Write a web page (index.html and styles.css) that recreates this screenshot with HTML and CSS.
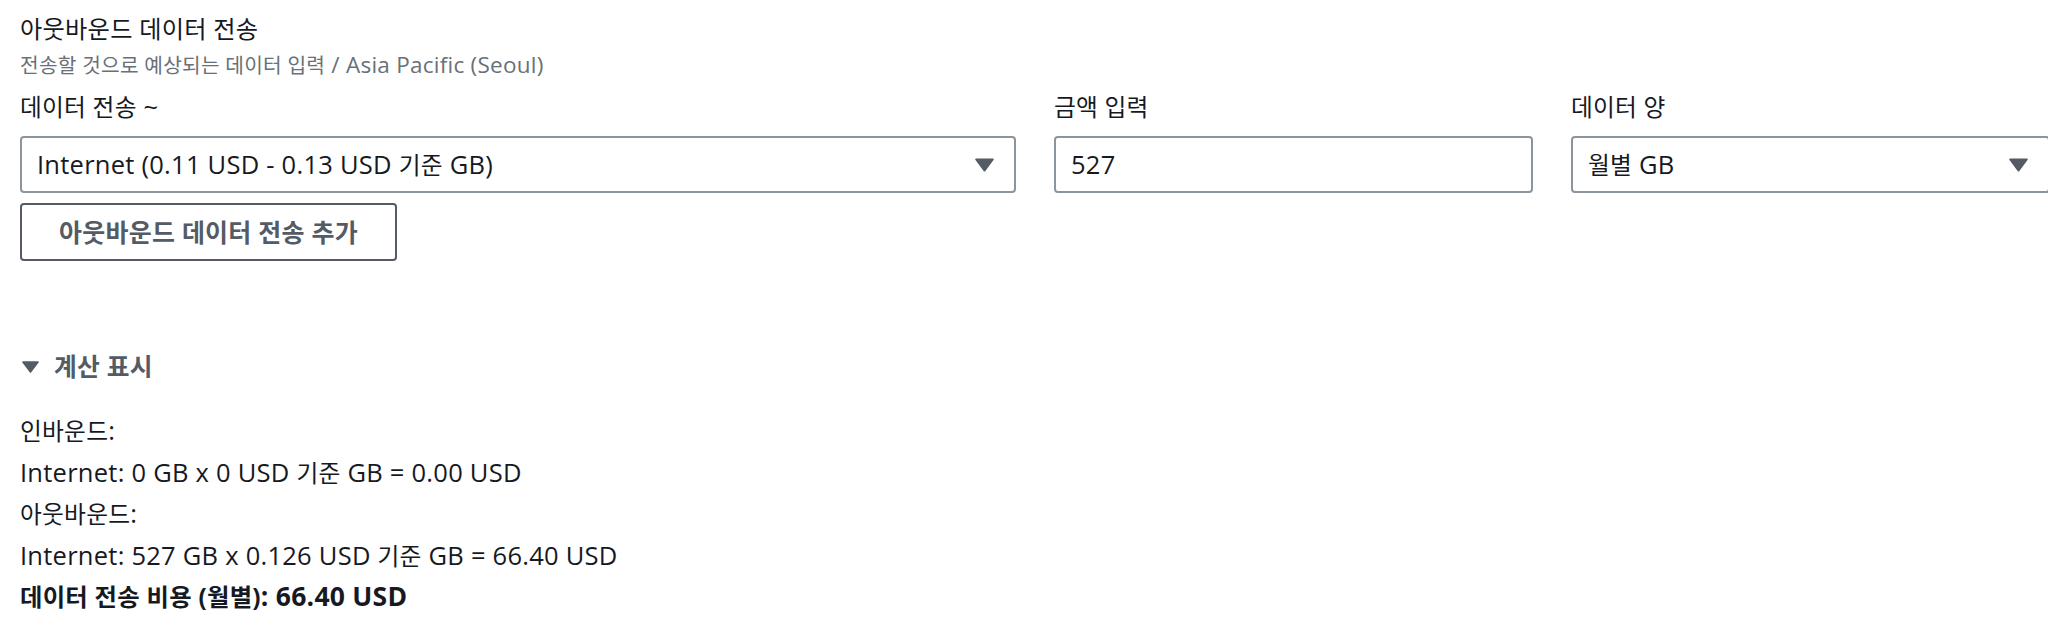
FILE: index.html
```html
<!DOCTYPE html>
<html lang="ko">
<head>
<meta charset="utf-8">
<title>아웃바운드 데이터 전송</title>
<link rel="stylesheet" href="styles.css">
</head>
<body>
<div class="page">
  <section class="transfer">
    <h2 class="title"><span class="ko">아웃바운드 데이터 전송</span></h2>
    <p class="desc"><span class="ko">전송할 것으로 예상되는 데이터 입력</span> / Asia Pacific (Seoul)</p>
    <div class="fields">
      <div class="field wide">
        <div class="label"><span class="ko">데이터 전송</span> ~</div>
        <div class="control select">
          <span class="value">Internet (0.11 USD - 0.13 USD <span class="ko">기준</span> GB)</span>
          <svg class="caret" viewBox="0 0 19 14" width="19" height="14"><path d="M1 0.5 H18 a0.8 0.8 0 0 1 0.7 1.2 L10.2 13.2 a0.8 0.8 0 0 1 -1.4 0 L0.3 1.7 A0.8 0.8 0 0 1 1 0.5 Z"/></svg>
        </div>
        <button class="btn" type="button"><span class="ko">아웃바운드 데이터 전송 추가</span></button>
      </div>
      <div class="field">
        <div class="label"><span class="ko">금액 입력</span></div>
        <div class="control input">527</div>
      </div>
      <div class="field">
        <div class="label"><span class="ko">데이터 양</span></div>
        <div class="control select">
          <span class="value"><span class="ko">월별</span> GB</span>
          <svg class="caret" viewBox="0 0 19 14" width="19" height="14"><path d="M1 0.5 H18 a0.8 0.8 0 0 1 0.7 1.2 L10.2 13.2 a0.8 0.8 0 0 1 -1.4 0 L0.3 1.7 A0.8 0.8 0 0 1 1 0.5 Z"/></svg>
        </div>
      </div>
    </div>
  </section>

  <section class="calc">
    <div class="expander">
      <svg class="exp-caret" viewBox="0 0 17 12" width="17" height="12"><path d="M0.9 0.3 H16.1 a0.8 0.8 0 0 1 0.6 1.3 L9.1 11.4 a0.8 0.8 0 0 1 -1.2 0 L0.3 1.6 A0.8 0.8 0 0 1 0.9 0.3 Z"/></svg>
      <span class="ko">계산 표시</span>
    </div>
    <div class="lines">
      <div class="line"><span class="ko">인바운드</span>:</div>
      <div class="line">Internet: 0 GB x 0 USD <span class="ko">기준</span> GB = 0.00 USD</div>
      <div class="line"><span class="ko">아웃바운드</span>:</div>
      <div class="line">Internet: 527 GB x 0.126 USD <span class="ko">기준</span> GB = 66.40 USD</div>
      <div class="line total"><span class="ko">데이터 전송 비용 (월별)</span>: 66.40 USD</div>
    </div>
  </section>
</div>
</body>
</html>
```

FILE: styles.css
```css
html, body {
  margin: 0;
  padding: 0;
  background: #ffffff;
  overflow: hidden;
}

body {
  font-family: "Open Sans", "Noto Sans CJK KR", sans-serif;
  font-size: 25.5px;
  letter-spacing: 0.25px;
  color: #16191f;
}

.ko {
  font-size: 0.93em;
  line-height: 1;
}

.page {
  width: 2030px;
  padding: 10px 0 0 20px;
}

.title {
  margin: 0;
  font-size: 25.5px;
  font-weight: 400;
  line-height: 36px;
}

.title .ko {
  font-size: 0.95em;
}

.desc {
  margin: 0;
  font-size: 22.5px;
  line-height: 37px;
  color: #687078;
}

.desc .ko {
  font-size: 0.9em;
}

.fields {
  display: grid;
  grid-template-columns: repeat(4, 479px);
  column-gap: 38px;
  margin-top: 2px;
}

.field.wide {
  grid-column: span 2;
}

.label {
  line-height: 42px;
  height: 42px;
  margin-bottom: 9px;
}

.control {
  box-sizing: border-box;
  height: 57px;
  border: 2px solid #8d959c;
  border-radius: 4px;
  display: flex;
  align-items: center;
  padding: 0 20px 0 15px;
  line-height: 1;
}

.select {
  justify-content: space-between;
}

.value {
  white-space: nowrap;
}

.caret {
  fill: #545b64;
  flex: none;
}

.btn {
  display: flex;
  align-items: center;
  justify-content: center;
  box-sizing: border-box;
  margin-top: 10px;
  width: 377px;
  height: 58px;
  padding: 0;
  background: #ffffff;
  border: 2px solid #545b64;
  border-radius: 4px;
  font-family: inherit;
  font-size: 25.5px;
  letter-spacing: 0.25px;
  font-weight: 700;
  color: #545b64;
}

.btn .ko {
  font-size: 0.98em;
}

.calc {
  padding-top: 86px;
}

.expander {
  display: flex;
  align-items: center;
  gap: 15px;
  height: 40px;
  font-weight: 700;
  color: #545b64;
  padding-left: 2px;
}

.expander .ko {
  font-size: 0.97em;
}

.exp-caret {
  fill: #545b64;
  flex: none;
}

.lines {
  margin-top: 23px;
}

.line {
  height: 41.5px;
  line-height: 41.5px;
  white-space: nowrap;
}

.total {
  font-weight: 700;
  font-size: 26.5px;
}

.total .ko {
  font-size: 0.92em;
}
```
